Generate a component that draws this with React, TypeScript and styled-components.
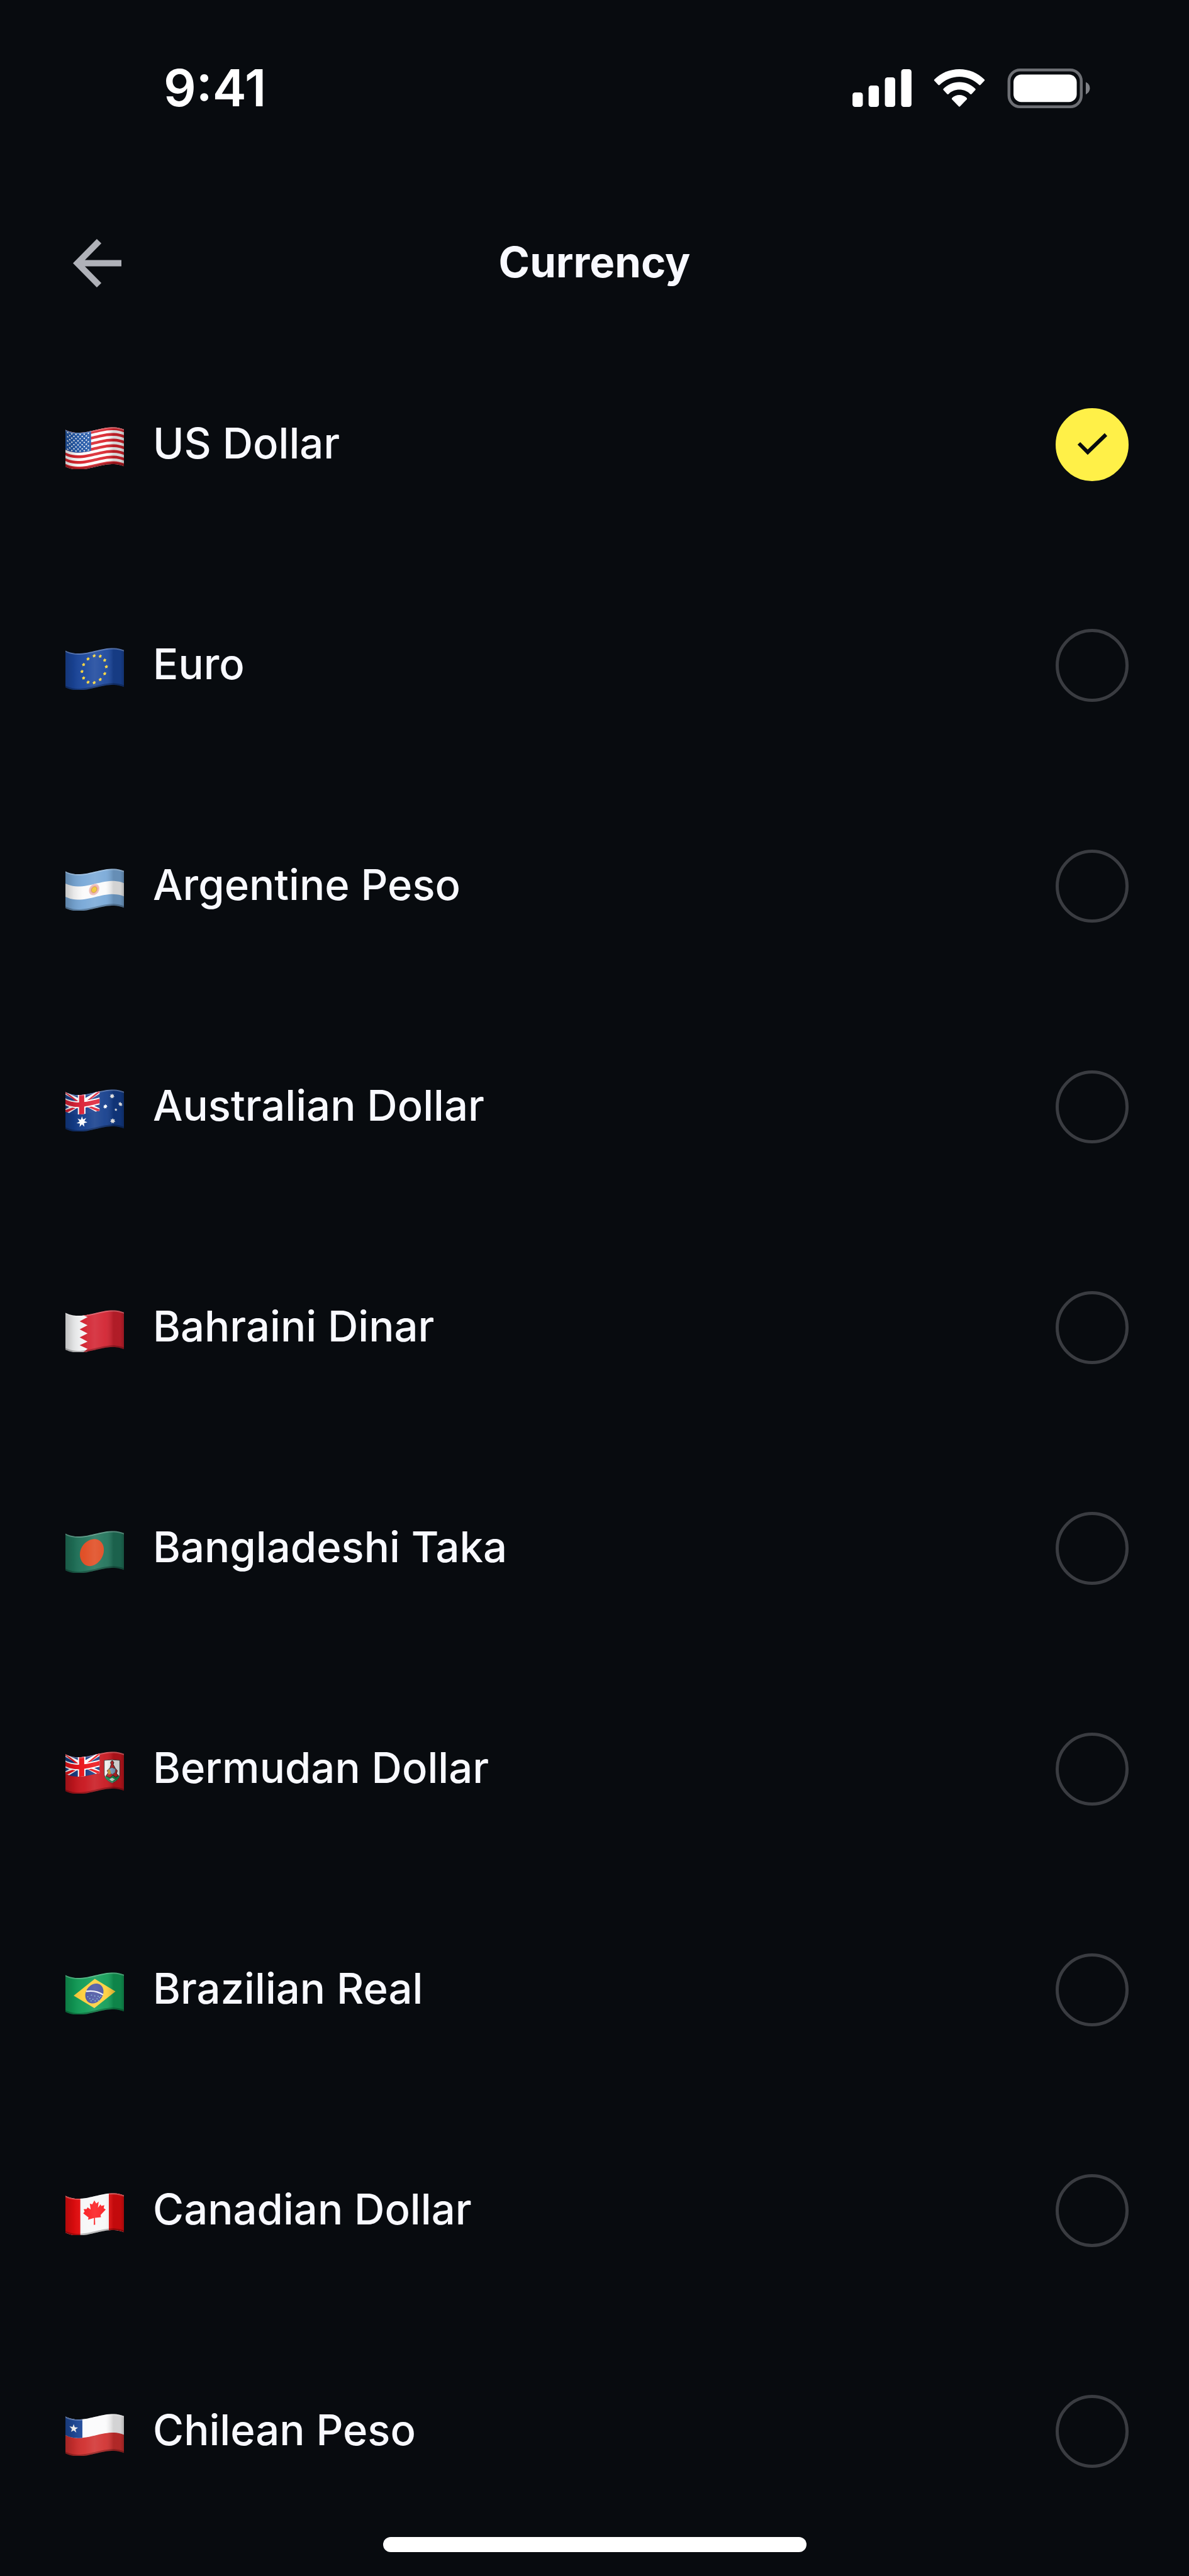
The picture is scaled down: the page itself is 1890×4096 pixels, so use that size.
import React, { useState } from 'react';
import styled, { createGlobalStyle } from 'styled-components';

const GlobalStyle = createGlobalStyle`
  * {
    box-sizing: border-box;
  }

  body {
    margin: 0;
    background-color: #080b0f;
    color: #f8f9ff;
    font-family: Inter, "Liberation Sans", sans-serif;
  }
`;

const Screen = styled.div`
  display: flex;
  flex-direction: column;
  min-height: 100vh;
`;

const StatusBar = styled.div`
  display: flex;
  align-items: center;
  justify-content: space-between;
  height: 280px;
  padding: 0 157px 0 260px;
  color: #fff;
`;

const Time = styled.time`
  font-size: 81px;
  font-weight: 600;
  line-height: 96px;
`;

const StatusIcons = styled.div`
  display: flex;
  align-items: center;
  gap: 35px;
`;

const Header = styled.header`
  display: grid;
  grid-template-columns: 1fr auto 1fr;
  align-items: center;
  height: 276px;
  padding: 0 116px;
`;

const BackButton = styled.button`
  justify-self: start;
  display: flex;
  padding: 0;
  border: none;
  background: none;
  color: #afb1b8;
  cursor: pointer;
`;

const Title = styled.h1`
  margin: 0;
  padding-bottom: 2px;
  font-size: 67px;
  font-weight: 700;
  line-height: 80px;
`;

const CurrencyList = styled.ul`
  display: flex;
  flex-direction: column;
  gap: 235px;
  margin: 0;
  padding: 93px 96px 0 104px;
  list-style: none;
`;

const CurrencyRow = styled.label`
  display: flex;
  align-items: center;
  gap: 46px;
  height: 116px;
  cursor: pointer;
`;

const CurrencyName = styled.span`
  flex: 1;
  padding-bottom: 4px;
  font-size: 67px;
  font-weight: 500;
  line-height: 80px;
`;

const RadioBox = styled.span`
  display: grid;
  width: 116px;
  height: 116px;

  > * {
    grid-area: 1 / 1;
  }
`;

const Radio = styled.input`
  appearance: none;
  width: 116px;
  height: 116px;
  margin: 0;
  border: 5px solid #3a3c41;
  border-radius: 50%;
  cursor: pointer;

  &:checked {
    border-color: #fff048;
    background-color: #fff048;
  }
`;

const CheckIcon = styled.svg`
  pointer-events: none;
`;

const Footer = styled.footer`
  display: flex;
  justify-content: center;
  margin-top: auto;
  padding: 110px 0 38px;
`;

const HomeIndicator = styled.div`
  width: 673px;
  height: 24px;
  border-radius: 12px;
  background-color: #fff;
`;

/* ---------- flags ---------- */

const FLAG_W = 283;
const FLAG_H = 178;

type Point = [number, number];

// height of the cloth's upper edge at x
const wave = (x: number) => {
  const u = x / FLAG_W;
  return 13 + 139.8 * u - 403.8 * u * u + 262 * u * u * u;
};

const warp = (points: Point[]) =>
  points.map(([x, y]) => `${x.toFixed(1)},${(y + wave(x)).toFixed(1)}`).join(' ');

const patch = (x: number, y: number, w: number, h: number) => {
  const steps = 24;
  const top: Point[] = [];
  const bottom: Point[] = [];
  for (let i = 0; i <= steps; i++) {
    const px = x + (w * i) / steps;
    top.push([px, y]);
    bottom.unshift([px, y + h]);
  }
  return warp([...top, ...bottom]);
};

const ellipse = (cx: number, cy: number, rx: number, ry: number) => {
  const points: Point[] = [];
  for (let i = 0; i < 40; i++) {
    const a = (i / 40) * Math.PI * 2;
    points.push([cx + rx * Math.cos(a), cy + ry * Math.sin(a)]);
  }
  return warp(points);
};

const star = (cx: number, cy: number, r: number, tips = 5, inner = 0.4) => {
  const points: Point[] = [];
  for (let i = 0; i < tips * 2; i++) {
    const a = (i / tips) * Math.PI - Math.PI / 2;
    const len = i % 2 ? r * inner : r;
    points.push([cx + len * Math.cos(a), cy + len * Math.sin(a)]);
  }
  return warp(points);
};

type PatchProps = {
  x?: number;
  y?: number;
  w?: number;
  h?: number;
  fill: string;
};

const Patch = ({ x = 0, y = 0, w = FLAG_W, h = FLAG_H, fill }: PatchProps) => (
  <polygon points={patch(x, y, w, h)} fill={fill} />
);

const UnionJack = ({ blue, red }: { blue: string; red: string }) => (
  <>
    <Patch w={165} h={94} fill={blue} />
    <polygon points={warp([[0, 0], [18, 0], [165, 82], [165, 94], [146, 94], [0, 12]])} fill="#fff" />
    <polygon points={warp([[165, 0], [146, 0], [0, 82], [0, 94], [18, 94], [165, 12]])} fill="#fff" />
    <polygon points={warp([[0, 0], [8, 0], [78, 42], [66, 42], [0, 6]])} fill={red} />
    <polygon points={warp([[165, 0], [157, 0], [88, 42], [100, 42], [165, 6]])} fill={red} />
    <polygon points={warp([[0, 94], [0, 87], [66, 50], [78, 50], [9, 94]])} fill={red} />
    <polygon points={warp([[165, 94], [165, 87], [100, 50], [88, 50], [155, 94]])} fill={red} />
    <Patch x={60} w={37} h={94} fill="#fff" />
    <Patch y={30} w={165} h={34} fill="#fff" />
    <Patch x={66} w={25} h={94} fill={red} />
    <Patch y={36} w={165} h={22} fill={red} />
  </>
);

const cantonStars: Point[] = [];
for (let row = 0; row < 9; row++) {
  for (let col = 0; col < (row % 2 ? 5 : 6); col++) {
    cantonStars.push([11 + col * 20 + (row % 2 ? 10 : 0), 9 + row * 10]);
  }
}

const mapleLeaf: Point[] = [
  [140, 20], [149, 37], [161, 31], [157, 60], [170, 46], [174, 55], [188, 53],
  [185, 68], [195, 76], [170, 98], [172, 109], [143, 105], [144, 138], [137, 138],
  [138, 105], [109, 107], [112, 97], [86, 72], [93, 65], [88, 52], [103, 54],
  [107, 46], [122, 60], [118, 31], [130, 37],
];

const flagArt: Record<string, React.ReactNode> = {
  us: (
    <>
      <Patch fill="#fff" />
      {[0, 1, 2, 3, 4, 5, 6].map((i) => (
        <Patch key={i} y={(i * 2 * FLAG_H) / 13} h={FLAG_H / 13} fill="#d9232c" />
      ))}
      <Patch w={124} h={96} fill="#2459a8" />
      {cantonStars.map(([x, y]) => (
        <polygon key={`${x}-${y}`} points={star(x, y, 5, 5, 0.5)} fill="#fff" />
      ))}
    </>
  ),
  eu: (
    <>
      <Patch fill="#1a469c" />
      {Array.from({ length: 12 }, (_, i) => {
        const a = (i / 12) * Math.PI * 2;
        return (
          <polygon key={i} points={star(139 + 59 * Math.cos(a), 88 + 65 * Math.sin(a), 9, 5, 0.6)} fill="#ffd83b" />
        );
      })}
    </>
  ),
  ar: (
    <>
      <Patch fill="#79a9d8" />
      <Patch y={59} h={64} fill="#fbfbfb" />
      <polygon points={ellipse(139, 86, 25, 27)} fill="#efbdb9" />
      <polygon points={star(139, 86, 23, 16, 0.7)} fill="#e9a6a0" />
      <polygon points={ellipse(139, 86, 13, 14)} fill="#f0c42c" stroke="#b9802a" strokeWidth="2" />
    </>
  ),
  au: (
    <>
      <Patch fill="#133d8c" />
      <UnionJack blue="#1b418f" red="#dc2237" />
      <polygon points={star(80, 131, 27, 7, 0.45)} fill="#fff" />
      <polygon points={star(226, 32, 12, 7, 0.6)} fill="#fff" />
      <polygon points={star(193, 79, 11, 7, 0.6)} fill="#fff" />
      <polygon points={star(266, 66, 11, 7, 0.6)} fill="#fff" />
      <polygon points={star(244, 97, 7, 5, 0.6)} fill="#fff" />
      <polygon points={star(229, 152, 13, 7, 0.6)} fill="#fff" />
    </>
  ),
  bh: (
    <>
      <Patch w={110} fill="#f4f5f6" />
      <Patch x={107} w={176} fill="#d2212f" />
      <polygon
        points={warp([
          [87, 0], [107, 11], [69, 27], [107, 51], [69, 66], [107, 90], [69, 105],
          [107, 130], [69, 143], [107, 165], [87, 178], [109, 178], [109, 0],
        ])}
        fill="#d2212f"
      />
    </>
  ),
  bd: (
    <>
      <Patch fill="#20735a" />
      <polygon points={ellipse(128, 87, 58, 64)} fill="#e04a20" />
    </>
  ),
  bm: (
    <>
      <Patch fill="#c8161e" />
      <UnionJack blue="#173a80" red="#ec1218" />
      <path d="M188 42Q226 36 263 42V112Q262 136 226 152Q190 136 188 112Z" fill="#f2f2f2" stroke="#3a3430" strokeWidth="3" />
      <path d="M191 120Q226 104 261 118Q258 136 226 149Q196 138 191 120Z" fill="#178a4d" />
      <path d="M226 42L234 52L231 62L241 80L251 92L247 106L257 116L243 124L230 114L216 126L196 118L207 102L202 92L216 78L221 62L218 52Z" fill="#c32227" stroke="#272321" strokeWidth="3" />
      <path d="M211 83L226 77L243 84L240 101L227 110L213 101Z" fill="#84a9ce" stroke="#454840" strokeWidth="2" />
      <path d="M207 84L217 90L221 108L208 111L204 98Z" fill="#c79b36" />
      <path d="M212 134L226 126L240 134L226 144Z" fill="#d3e1d4" />
    </>
  ),
  br: (
    <>
      <Patch fill="#119d57" />
      <polygon points="40,113 142,31 242,92 140,173" fill="#ffd03b" />
      <polygon points={ellipse(140, 87, 44, 47)} fill="#4953a2" />
      <path d="M100 92Q145 84 182 108" fill="none" stroke="#eef0f8" strokeWidth="7" />
      {[[108, 118], [118, 126], [126, 110], [133, 130], [142, 114], [144, 138], [153, 128], [160, 136], [165, 122], [158, 116], [124, 138], [171, 116]].map(
        ([x, y]) => (
          <circle key={`${x}-${y}`} cx={x} cy={y} r="3" fill="#7fb2cf" />
        ),
      )}
    </>
  ),
  ca: (
    <>
      <Patch fill="#f7f7f8" />
      <Patch w={72} fill="#e80c0e" />
      <Patch x={210} w={73} fill="#e80c0e" />
      <polygon points={warp(mapleLeaf)} fill="#fb1b1f" />
    </>
  ),
  cl: (
    <>
      <Patch h={92} fill="#fbfbfc" />
      <Patch y={90} h={88} fill="#d1302f" />
      <Patch w={82} h={90} fill="#1f4a9b" />
      <polygon points={star(40, 46, 22)} fill="#fff" />
    </>
  ),
};

const Flag = ({ code }: { code: string }) => (
  <svg width="93" height="77" viewBox="0 -31 283 234" aria-hidden="true">
    <defs>
      <linearGradient id={`${code}-folds`} x1="0" x2="1" y1="0" y2="0">
        <stop offset="0" stopColor="#000" stopOpacity="0.22" />
        <stop offset="0.14" stopColor="#000" stopOpacity="0.08" />
        <stop offset="0.32" stopColor="#fff" stopOpacity="0.04" />
        <stop offset="0.5" stopColor="#fff" stopOpacity="0.12" />
        <stop offset="0.68" stopColor="#fff" stopOpacity="0.06" />
        <stop offset="0.82" stopColor="#000" stopOpacity="0.16" />
        <stop offset="0.94" stopColor="#000" stopOpacity="0.16" />
        <stop offset="1" stopColor="#000" stopOpacity="0.28" />
      </linearGradient>
    </defs>
    {flagArt[code]}
    <Patch fill={`url(#${code}-folds)`} />
    <polygon points={patch(0, 0, FLAG_W, 6)} fill="#fff" fillOpacity="0.25" />
    <polygon points={patch(0, 170, FLAG_W, 8)} fill="#000" fillOpacity="0.25" />
  </svg>
);

/* ---------- status bar icons ---------- */

const SignalIcon = () => (
  <svg width="94" height="60" viewBox="0 0 286 183" fill="currentColor" aria-hidden="true">
    <rect x="0" y="113" width="50" height="70" rx="13" />
    <rect x="78" y="79" width="50" height="104" rx="13" />
    <rect x="157" y="40" width="50" height="143" rx="13" />
    <rect x="236" y="0" width="50" height="183" rx="13" />
  </svg>
);

const WifiIcon = () => (
  <svg width="82" height="60" viewBox="0 0 249 184" fill="currentColor" aria-hidden="true">
    <path d="M3 50C34 19 77 0 124.500 0S215 19 246 50Q250 54 246 57L228 76Q224 80 220 76C195 52 161 37 124.500 37S54 52 29 76Q25 80 21 76L3 57Q-1 54 3 50Z" />
    <path d="M48 94C68 75 95 63 124.500 63S181 75 201 94Q206 99 201 103L185 120Q181 125 176 120C163 108 145 100 124.500 100S86 108 73 120Q68 125 64 120L48 103Q43 99 48 94Z" />
    <path d="M90 139C99 131 111 126 124.500 126S150 131 159 139Q164 144 160 148L128 181Q124.500 185 121 181L89 148Q85 144 90 139Z" />
  </svg>
);

const BatteryIcon = () => (
  <svg width="132" height="63" viewBox="0 0 401 193" fill="currentColor" aria-hidden="true">
    <rect x="7" y="7" width="352" height="179" rx="54" fill="none" stroke="#6d6f74" strokeWidth="14" />
    <rect x="29" y="29" width="308" height="134" rx="38" />
    <path d="M381 66Q401 76 401 96T381 126Z" fill="#808287" />
  </svg>
);

type Currency = {
  code: string;
  name: string;
};

const currencies: Currency[] = [
  { code: 'us', name: 'US Dollar' },
  { code: 'eu', name: 'Euro' },
  { code: 'ar', name: 'Argentine Peso' },
  { code: 'au', name: 'Australian Dollar' },
  { code: 'bh', name: 'Bahraini Dinar' },
  { code: 'bd', name: 'Bangladeshi Taka' },
  { code: 'bm', name: 'Bermudan Dollar' },
  { code: 'br', name: 'Brazilian Real' },
  { code: 'ca', name: 'Canadian Dollar' },
  { code: 'cl', name: 'Chilean Peso' },
];

const App = () => {
  const [selected, setSelected] = useState('us');

  return (
    <>
      <GlobalStyle />
      <Screen>
        <StatusBar>
          <Time>9:41</Time>
          <StatusIcons>
            <SignalIcon />
            <WifiIcon />
            <BatteryIcon />
          </StatusIcons>
        </StatusBar>
        <Header>
          <BackButton type="button" aria-label="Back">
            <svg width="77" height="77" viewBox="0 0 77 77" fill="none" stroke="currentColor" strokeWidth="10">
              <path d="M41.500 3.500L7 38.500L41.500 73.500M9 38.500H77" />
            </svg>
          </BackButton>
          <Title>Currency</Title>
        </Header>
        <CurrencyList>
          {currencies.map(({ code, name }) => (
            <li key={code}>
              <CurrencyRow htmlFor={`currency-${code}`}>
                <Flag code={code} />
                <CurrencyName>{name}</CurrencyName>
                <RadioBox>
                  <Radio
                    type="radio"
                    id={`currency-${code}`}
                    name="currency"
                    value={code}
                    checked={selected === code}
                    onChange={() => setSelected(code)}
                  />
                  {selected === code && (
                    <CheckIcon width="116" height="116" viewBox="0 0 116 116" fill="none" stroke="#080b0f" strokeWidth="6">
                      <path d="M37 56L51 70L80 42" />
                    </CheckIcon>
                  )}
                </RadioBox>
              </CurrencyRow>
            </li>
          ))}
        </CurrencyList>
        <Footer>
          <HomeIndicator />
        </Footer>
      </Screen>
    </>
  );
};

export default App;
